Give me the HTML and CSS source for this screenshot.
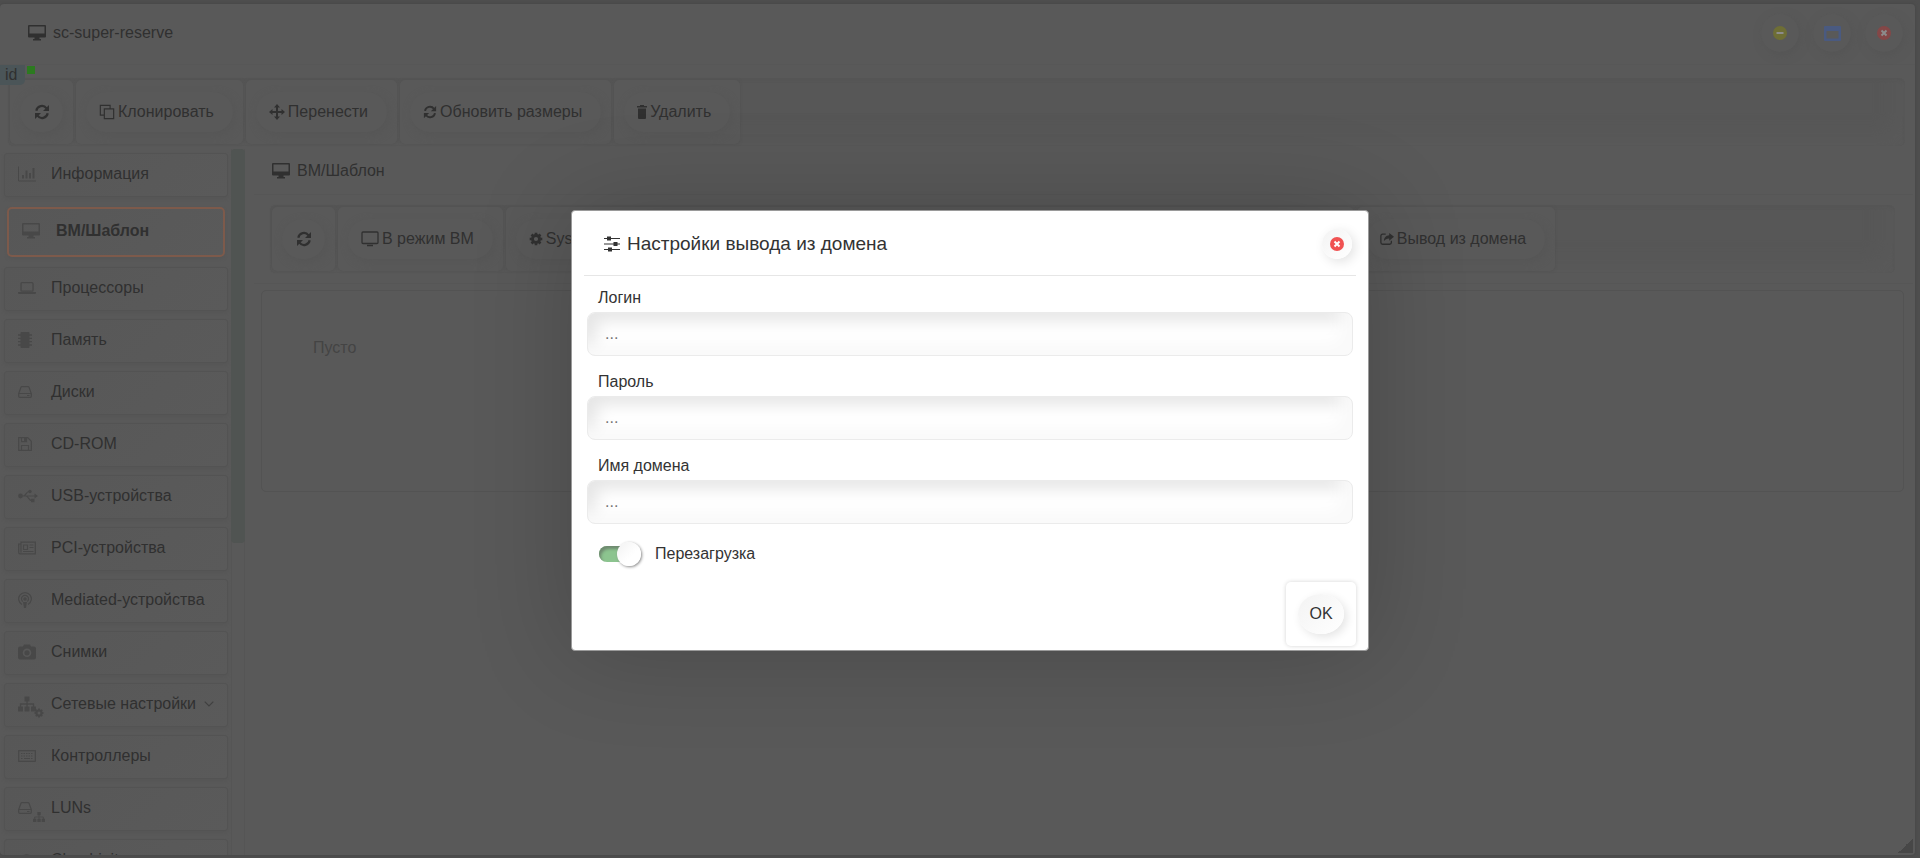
FILE: index.html
```html
<!DOCTYPE html>
<html lang="ru">
<head>
    <meta charset="UTF-8">
    <meta name="viewport" content="width=device-width, initial-scale=1.0">
    <title>sc-super-reserve</title>
    <link rel="stylesheet" href="styles.css">
</head>
<body>
    <svg class="sprite" aria-hidden="true">
        <symbol id="i-desktop" viewBox="0 0 18 16"><path fill="currentColor" fill-rule="evenodd" d="M1 0h16a1 1 0 0 1 1 1v10.500a1 1 0 0 1-1 1h-5.500V14H13v1.500H5V14h1.500v-1.500H1a1 1 0 0 1-1-1V1a1 1 0 0 1 1-1zm.5 1.500v7h15v-7z"/></symbol>
        <symbol id="i-screen" viewBox="0 0 18 16"><rect x="1" y="1" width="16" height="11.500" rx="1" fill="none" stroke="currentColor" stroke-width="1.300"/><path d="M6 14.500h6" stroke="currentColor" stroke-width="1.300"/></symbol>
        <symbol id="i-refresh" viewBox="0 0 16 16"><path fill="none" stroke="currentColor" stroke-width="2.200" d="M2.300 6.700A5.700 5.700 0 0 1 12.500 4.300M13.700 9.300A5.700 5.700 0 0 1 3.500 11.700"/><path fill="currentColor" d="M15 1v6H9zM1 15V9h6z"/></symbol>
        <symbol id="i-clone" viewBox="0 0 18 18"><path fill="none" stroke="currentColor" stroke-width="1.300" d="M12.500 5.500V1.500h-11v11h4M6 5.500h10.500v11H6z"/></symbol>
        <symbol id="i-move" viewBox="0 0 16 16"><path stroke="currentColor" stroke-width="2" d="M8 2v12M2 8h12"/><path fill="currentColor" d="M8 0l3 3.500H5zM8 16l3-3.500H5zM0 8l3.500-3v6zM16 8l-3.500-3v6z"/></symbol>
        <symbol id="i-trash" viewBox="0 0 10 14"><path fill="currentColor" d="M0 1h3V0h4v1h3v1.500H0zM1 3.500h8V13a1 1 0 0 1-1 1H2a1 1 0 0 1-1-1z"/></symbol>
        <symbol id="i-gear" viewBox="0 0 16 16"><circle cx="8" cy="8" r="4" fill="none" stroke="currentColor" stroke-width="3.200"/><path fill="none" stroke="currentColor" stroke-width="3" d="M8 .8v2.400M8 12.800v2.400M.8 8h2.400M12.800 8h2.400M2.900 2.900l1.700 1.700M11.400 11.400l1.700 1.700M13.100 2.900l-1.700 1.700M4.600 11.400l-1.700 1.700"/></symbol>
        <symbol id="i-share" viewBox="0 0 16 14"><path fill="none" stroke="currentColor" stroke-width="1.500" d="M6.500 1.500H3a2 2 0 0 0-2 2V11a2 2 0 0 0 2 2h8a2 2 0 0 0 2-2V9"/><path fill="currentColor" d="M10.500 0L16 4.500 10.500 9V6.300C7.500 6.300 6 7.200 4.500 9.500 4.500 5.500 7 3 10.500 2.800z"/></symbol>
        <symbol id="i-chart" viewBox="0 0 18 15"><path fill="none" stroke="currentColor" d="M.5 0v14.500H18"/><path stroke="currentColor" stroke-width="2" d="M5 12V8.500M8.500 12V4M12 12V6.500M15.500 12V1.500"/></symbol>
        <symbol id="i-laptop" viewBox="0 0 18 12"><rect x="3" y=".7" width="12" height="8.500" rx="1" fill="none" stroke="currentColor" stroke-width="1.300"/><path fill="currentColor" d="M0 10h18v1a1 1 0 0 1-1 1H1a1 1 0 0 1-1-1z"/></symbol>
        <symbol id="i-chip" viewBox="0 0 14 16"><rect x="2.500" width="9" height="16" rx="1" fill="currentColor"/><path stroke="currentColor" stroke-width="1.300" d="M0 3h14M0 6.300h14M0 9.700h14M0 13h14"/></symbol>
        <symbol id="i-disk" viewBox="0 0 14 12"><path fill="none" stroke="currentColor" stroke-width="1.200" d="M.7 7.500L3 1.200q.2-.5.700-.5h6.600q.5 0 .7.500l2.300 6.300v2.800a1 1 0 0 1-1 1H1.700a1 1 0 0 1-1-1zM.7 7.500h12.600M9 9.500h2.500"/></symbol>
        <symbol id="i-floppy" viewBox="0 0 14 14"><path fill="none" stroke="currentColor" stroke-width="1.200" d="M.7.7h9l3.600 3.600v9H.7zM3.500 13V8.500h7V13M3.500.7v4h5v-4"/><path fill="currentColor" d="M6 1h2v3H6z"/></symbol>
        <symbol id="i-usb" viewBox="0 0 20 14"><path fill="none" stroke="currentColor" stroke-width="1.200" d="M3 7h14M5.500 7C8 7 8 2.500 11 2.500M8 7c2.500 0 2.500 4.500 5.500 4.500"/><circle cx="2.500" cy="7" r="2.400" fill="currentColor"/><circle cx="12" cy="2.500" r="1.700" fill="currentColor"/><path fill="currentColor" d="M16.500 4.500L20 7l-3.500 2.500zM13 9.800h3.500v3.500H13z"/></symbol>
        <symbol id="i-card" viewBox="0 0 18 13"><path fill="none" stroke="currentColor" stroke-width="1.200" d="M3 .7h14.300v11.600H2a1.300 1.300 0 0 1-1.300-1.300V2.500H3zM3 2v9M5.500 3.500h4v4.500h-4zM11.500 3.500h4M11.500 6h4M5 10h10.500"/></symbol>
        <symbol id="i-podcast" viewBox="0 0 14 16"><path fill="none" stroke="currentColor" stroke-width="1.200" d="M4 12.500a6.300 6.300 0 1 1 6 0M4.700 9.500a3.500 3.500 0 1 1 4.600 0"/><circle cx="7" cy="7" r="1.800" fill="currentColor"/><path fill="currentColor" d="M5 10h4l-1 6H6z"/></symbol>
        <symbol id="i-camera" viewBox="0 0 18 15"><path fill="currentColor" fill-rule="evenodd" d="M2 2h3l1-2h6l1 2h3a2 2 0 0 1 2 2v9a2 2 0 0 1-2 2H2a2 2 0 0 1-2-2V4a2 2 0 0 1 2-2zm7 2a4.300 4.300 0 1 0 0 8.600A4.300 4.300 0 0 0 9 4z"/><circle cx="9" cy="8.300" r="2.600" fill="currentColor"/></symbol>
        <symbol id="i-tree" viewBox="0 0 18 15"><path fill="currentColor" d="M6.500 0h5v5h-5zM0 10h5v5H0zM6.500 10h5v5h-5zM13 10h5v5h-5z"/><path fill="none" stroke="currentColor" stroke-width="1.300" d="M9 4v7M2.500 11V7.500h13V11"/></symbol>
        <symbol id="i-keyboard" viewBox="0 0 18 12"><rect x=".7" y=".7" width="16.600" height="10.600" fill="none" stroke="currentColor" stroke-width="1.200"/><path stroke="currentColor" stroke-dasharray="1.500 1" d="M3 3.500h12M3 6h12M3 8.500h2M13 8.500h2"/><path stroke="currentColor" d="M6 8.500h6"/></symbol>
        <symbol id="i-cloud" viewBox="0 0 18 14"><path fill="currentColor" d="M4 14a4 4 0 0 1-1.500-7.500A6 6 0 0 1 13.500 4 5 5 0 0 1 14 14z"/></symbol>
        <symbol id="i-chevron" viewBox="0 0 10 6"><path fill="none" stroke="currentColor" stroke-width="1.200" d="M.7.700L5 5 9.300.7"/></symbol>
        <symbol id="i-sliders" viewBox="0 0 16 16"><path stroke="currentColor" stroke-width="1.200" d="M0 2.500h16M0 8h16M0 13.500h16"/><path fill="currentColor" d="M3 .5h4v4H3zM9.500 6h4v4h-4zM4 11.500h4v4H4z"/></symbol>
        <symbol id="i-close" viewBox="0 0 14 14"><circle cx="7" cy="7" r="7" fill="currentColor"/><path class="glyph" d="M4.500 4.500l5 5M9.500 4.500l-5 5"/></symbol>
        <symbol id="i-minus" viewBox="0 0 14 14"><circle cx="7" cy="7" r="7" fill="currentColor"/><path class="glyph" d="M3.500 7h7"/></symbol>
        <symbol id="i-window" viewBox="0 0 17 15"><path fill="currentColor" fill-rule="evenodd" d="M1 0h15a1 1 0 0 1 1 1v13a1 1 0 0 1-1 1H1a1 1 0 0 1-1-1V1a1 1 0 0 1 1-1zm1.500 5v7.500h12V5z"/></symbol>
    </svg>

    <div class="window">
        <header class="window-header">
            <h1><svg class="icon wide"><use href="#i-desktop"/></svg>sc-super-reserve</h1>
            <div class="window-buttons">
                <button class="round minimize" aria-label="Свернуть"><svg><use href="#i-minus"/></svg></button>
                <button class="round maximize" aria-label="Развернуть"><svg><use href="#i-window"/></svg></button>
                <button class="round close" aria-label="Закрыть"><svg><use href="#i-close"/></svg></button>
            </div>
        </header>
        <div class="id-badge"><span>id</span><i></i></div>

        <div class="toolbar top-toolbar">
            <div class="cell"><button class="only-icon" aria-label="Обновить"><svg class="icon"><use href="#i-refresh"/></svg></button></div>
            <div class="cell"><button><svg class="icon"><use href="#i-clone"/></svg>Клонировать</button></div>
            <div class="cell"><button><svg class="icon"><use href="#i-move"/></svg>Перенести</button></div>
            <div class="cell"><button><svg class="icon small"><use href="#i-refresh"/></svg>Обновить размеры</button></div>
            <div class="cell"><button><svg class="icon narrow"><use href="#i-trash"/></svg>Удалить</button></div>
        </div>

        <div class="content">
            <nav class="sidebar">
                <a href="#"><span class="pic"><svg><use href="#i-chart"/></svg></span>Информация</a>
                <a href="#" class="active"><span class="pic"><svg><use href="#i-desktop"/></svg></span>ВМ/Шаблон</a>
                <a href="#"><span class="pic"><svg><use href="#i-laptop"/></svg></span>Процессоры</a>
                <a href="#"><span class="pic"><svg class="slim"><use href="#i-chip"/></svg></span>Память</a>
                <a href="#"><span class="pic"><svg class="slim"><use href="#i-disk"/></svg></span>Диски</a>
                <a href="#"><span class="pic"><svg class="slim"><use href="#i-floppy"/></svg></span>CD-ROM</a>
                <a href="#"><span class="pic"><svg class="long"><use href="#i-usb"/></svg></span>USB-устройства</a>
                <a href="#"><span class="pic"><svg><use href="#i-card"/></svg></span>PCI-устройства</a>
                <a href="#"><span class="pic"><svg class="slim"><use href="#i-podcast"/></svg></span>Mediated-устройства</a>
                <a href="#"><span class="pic"><svg><use href="#i-camera"/></svg></span>Снимки</a>
                <a href="#"><span class="pic"><svg><use href="#i-tree"/></svg><svg class="sub"><use href="#i-gear"/></svg></span>Сетевые настройки<svg class="chevron"><use href="#i-chevron"/></svg></a>
                <a href="#"><span class="pic"><svg><use href="#i-keyboard"/></svg></span>Контроллеры</a>
                <a href="#"><span class="pic"><svg class="slim"><use href="#i-disk"/></svg><svg class="sub"><use href="#i-tree"/></svg></span>LUNs</a>
                <a href="#"><span class="pic"><svg><use href="#i-cloud"/></svg></span>Cloud-init</a>
            </nav>
            <div class="scrollbar"><div class="thumb"></div></div>

            <main class="main">
                <h2><svg class="icon wide"><use href="#i-desktop"/></svg>ВМ/Шаблон</h2>
                <div class="toolbar-wrap">
                    <div class="toolbar">
                        <div class="cell"><button class="only-icon" aria-label="Обновить"><svg class="icon"><use href="#i-refresh"/></svg></button></div>
                        <div class="cell"><button><svg class="icon wide"><use href="#i-screen"/></svg>В режим ВМ</button></div>
                        <div class="cell stretch"><button><svg class="icon small"><use href="#i-gear"/></svg>Sysprep</button></div>
                        <div class="cell"><button><svg class="icon small"><use href="#i-share"/></svg>Вывод из домена</button></div>
                    </div>
                </div>
                <div class="panel">Пусто</div>
            </main>
        </div>
        <div class="resize-handle"></div>
    </div>

    <div class="overlay">
        <form class="dialog" role="dialog" aria-labelledby="dialogTitle">
            <header class="dialog-header">
                <h2 id="dialogTitle"><svg class="icon"><use href="#i-sliders"/></svg>Настройки вывода из домена</h2>
                <button type="button" class="dialog-close" aria-label="Закрыть"><svg><use href="#i-close"/></svg></button>
            </header>
            <div class="field">
                <label for="login">Логин</label>
                <input type="text" id="login" placeholder="...">
            </div>
            <div class="field">
                <label for="password">Пароль</label>
                <input type="password" id="password" placeholder="...">
            </div>
            <div class="field">
                <label for="domain">Имя домена</label>
                <input type="text" id="domain" placeholder="...">
            </div>
            <div class="switch-row">
                <input type="checkbox" class="switch" id="reboot" checked>
                <label for="reboot">Перезагрузка</label>
            </div>
            <footer class="dialog-footer">
                <div class="ok-cell"><button type="button">OK</button></div>
            </footer>
        </form>
    </div>
</body>
</html>
```

FILE: styles.css
```css
* {
    box-sizing: border-box;
}
body {
    font-family: "Liberation Sans", Arial, sans-serif;
    font-size: 16px;
    line-height: 20px;
    margin: 0;
    padding: 4px 5px 3px 0;
    height: 100vh;
    overflow: hidden;
    background-color: #4e4e4e;
    color: #303030;
}
h1, h2 {
    margin: 0;
    font-size: 16px;
    font-weight: normal;
    display: flex;
    align-items: center;
    gap: 7px;
}
button {
    font: inherit;
    color: inherit;
    border: none;
    cursor: pointer;
}
.sprite {
    position: absolute;
    width: 0;
    height: 0;
}
.icon {
    width: 16px;
    height: 16px;
    flex: none;
}
.icon.wide {
    width: 18px;
}
.icon.small {
    width: 14px;
}
.icon.narrow {
    width: 10px;
    height: 14px;
}
.glyph {
    fill: none;
    stroke: var(--glyph, #8c8c8c);
    stroke-width: 2px;
}

/* window */
.window {
    position: relative;
    height: 100%;
    display: flex;
    flex-direction: column;
    overflow: hidden;
    background-color: #595959;
    border-radius: 4px;
    box-shadow: 0 0 3px #444;
}
.window-header {
    flex: none;
    height: 61px;
    padding: 0 12px 2px 28px;
    display: flex;
    align-items: center;
    justify-content: space-between;
    border-bottom: 1px solid #575757;
}
.window-buttons {
    display: flex;
    gap: 14px;
}
.round {
    width: 38px;
    height: 38px;
    padding: 0;
    display: flex;
    align-items: center;
    justify-content: center;
    border-radius: 50%;
    background-color: #595959;
    box-shadow: 2px 3px 8px #555;
}
.round svg {
    width: 14px;
    height: 14px;
}
.minimize {
    color: #6e6e35;
}
.maximize {
    color: #4a5a80;
}
.round.maximize svg {
    width: 17px;
    height: 15px;
}
.close {
    color: #844747;
}
.id-badge {
    position: absolute;
    top: 61px;
    left: 0;
    z-index: 1;
    display: flex;
    gap: 2px;
}
.id-badge span {
    width: 25px;
    height: 20px;
    line-height: 19px;
    padding-left: 5px;
    background-color: #4b5558;
    border-radius: 0 0 5px 0;
}
.id-badge i {
    width: 8px;
    height: 8px;
    margin-top: 1px;
    background-color: #2c7a20;
}
.resize-handle {
    position: absolute;
    right: 2px;
    bottom: 2px;
    width: 15px;
    height: 15px;
    background: linear-gradient(135deg, transparent 50%, #474747 50%);
}

/* toolbars */
.toolbar {
    display: flex;
    gap: 3px;
    height: 68px;
    padding: 2px;
    border-radius: 6px;
    box-shadow: inset 0 2px 3px #555, inset -14px -14px 16px #595959;
    background-color: #575757;
}
.top-toolbar {
    flex: none;
    margin: 13px 10px 3px 8px;
}
.cell {
    height: 64px;
    padding: 12px 10px;
    border-radius: 5px;
    background-color: #595959;
    box-shadow: 0 0 3px #515151;
}
.cell button {
    height: 40px;
    padding: 0 19px 0 13px;
    display: flex;
    align-items: center;
    gap: 3px;
    border-radius: 20px;
    background-color: #595959;
    box-shadow: 2px 3px 8px #565656;
    white-space: nowrap;
}
.cell .only-icon {
    width: 43px;
    padding: 0;
    justify-content: center;
}
.cell.stretch {
    width: 848px;
}

/* sidebar */
.content {
    flex: 1;
    min-height: 0;
    display: flex;
}
.sidebar {
    width: 231px;
    padding: 4px 3px 0 4px;
    overflow: hidden;
}
.sidebar a {
    height: 44px;
    margin-bottom: 8px;
    padding: 0 0 2px 13px;
    display: flex;
    align-items: center;
    border: 1px solid #535353;
    border-radius: 3px;
    background: linear-gradient(135deg, #575757, #5a5a5a);
    box-shadow: 0 2px 3px #565656;
    color: #303030;
    text-decoration: none;
    white-space: nowrap;
}
.sidebar a.active {
    height: 50px;
    margin: 10px 3px;
    border: 2px solid #7d5a4b;
    border-radius: 5px;
    font-weight: bold;
}
.pic {
    position: relative;
    width: 33px;
    height: 16px;
    display: flex;
    color: #484848;
}
.active .pic {
    width: 34px;
}
.pic svg {
    width: 18px;
    height: 16px;
}
.pic .slim {
    width: 14px;
}
.pic .long {
    width: 20px;
}
.pic .sub {
    position: absolute;
    left: 15px;
    top: 12px;
    width: 12px;
    height: 10px;
}
.chevron {
    width: 10px;
    height: 6px;
    margin-left: 8px;
    color: #404040;
}
.scrollbar {
    width: 14px;
    border: solid #555;
    border-width: 0 1px;
}
.thumb {
    height: 394px;
    margin: 0 -1px;
    background-color: #505452;
    border-radius: 4px;
}

/* main */
.main {
    flex: 1;
    min-width: 0;
    padding: 0 2px 0 9px;
}
.main h2 {
    height: 46px;
    padding: 0 0 2px 18px;
    border-bottom: 1px solid #565656;
}
.toolbar-wrap {
    padding: 10px 18px 10px 16px;
    border-bottom: 1px solid #565656;
}
.panel {
    height: 202px;
    margin: 6px 9px 0 7px;
    padding: 47px 51px;
    border: 1px solid #535353;
    border-radius: 5px;
    color: #444;
}

/* dialog */
.overlay {
    position: absolute;
    inset: 0;
    display: flex;
    align-items: center;
    justify-content: center;
    padding: 2px 0 0 20px;
}
.dialog {
    width: 798px;
    padding: 0 12px 4px;
    background-color: #fff;
    border: 1px solid #9a9a9a;
    border-radius: 4px;
    box-shadow: 0 0 100px rgba(0, 0, 0, 0.2);
    color: #333;
}
.dialog-header {
    height: 65px;
    margin-bottom: 12px;
    padding: 3px 4px 0 20px;
    display: flex;
    align-items: center;
    justify-content: space-between;
    border-bottom: 1px solid #e6e6e6;
}
.dialog-header h2 {
    font-size: 19px;
}
.dialog-close {
    --glyph: #fff;
    width: 30px;
    height: 30px;
    padding: 0;
    display: flex;
    align-items: center;
    justify-content: center;
    border-radius: 50%;
    background: linear-gradient(135deg, #f3f3f3, #fff);
    box-shadow: 3px 3px 12px #e2e2e2, 0 0 0 1px #fff;
    color: #f05252;
}
.dialog-close svg {
    width: 14px;
    height: 14px;
}
.field {
    margin: 0 3px 16px;
}
.field label {
    display: block;
    height: 24px;
    padding-left: 11px;
    line-height: 20px;
}
.field input {
    display: block;
    width: 100%;
    height: 44px;
    padding: 0 17px;
    border: 1px solid #ebebeb;
    border-radius: 8px;
    background-color: #fff;
    box-shadow: inset -12px -12px 16px #fafafa, inset 8px 8px 16px #e6e6e6;
    font: inherit;
}
.field input::placeholder {
    color: #757575;
}
.switch-row {
    display: flex;
    align-items: center;
    gap: 14px;
    height: 28px;
    margin-left: 15px;
}
.switch {
    appearance: none;
    position: relative;
    width: 42px;
    height: 16px;
    margin: 0;
    border-radius: 8px;
    background: linear-gradient(to right, #8cc48f 30px, transparent 30px);
}
.switch::before {
    content: "";
    position: absolute;
    left: 0;
    top: 0;
    width: 30px;
    height: 16px;
    border-radius: 8px 0 0 8px;
    box-shadow: inset 2px 3px 3px #6f8a70;
}
.switch::after {
    content: "";
    position: absolute;
    right: 0;
    top: -4px;
    width: 24px;
    height: 24px;
    border-radius: 50%;
    background: linear-gradient(135deg, #f2f2f2, #fff 60%);
    box-shadow: 1px 1px 3px #888;
}
.dialog-footer {
    display: flex;
    justify-content: flex-end;
    margin-top: 14px;
}
.ok-cell {
    width: 70px;
    height: 64px;
    padding: 12px;
    border-radius: 5px;
    box-shadow: 0 0 4px #d4d4d4;
}
.ok-cell button {
    width: 46px;
    height: 40px;
    padding: 0;
    border-radius: 50%;
    background: linear-gradient(135deg, #f3f3f3, #fff);
    box-shadow: 3px 3px 10px #e4e4e4;
}
```
